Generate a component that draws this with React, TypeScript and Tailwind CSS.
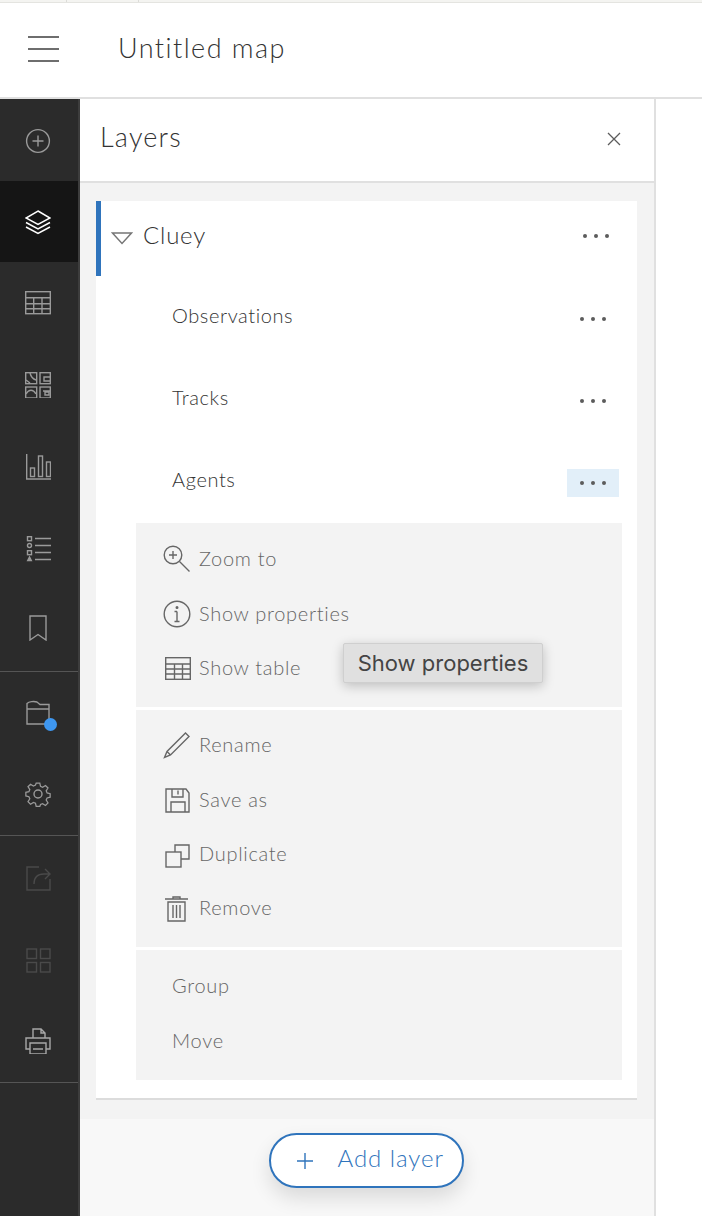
import React from 'react';

const font = 'font-["Lato","Noto_Sans",sans-serif]';

const Ico: React.FC<{ size?: number; className?: string; children: React.ReactNode; vb?: string; sw?: number }> = ({ size = 26, className = '', children, vb = '0 0 26 26', sw = 1.4 }) => (
  <svg width={size} height={size} viewBox={vb} fill="none" stroke="currentColor" strokeWidth={sw} className={className}>
    {children}
  </svg>
);

const TableGlyph = () => (
  <>
    <rect x="0.7" y="1.7" width="24.6" height="22" />
    <path d="M1 7.700h24M1 13.700h24M1 18.700h24M8.700 8v16M17 8v16" />
  </>
);

const railTop = [
  { key: 'add', active: false, icon: <Ico className="translate-y-[1px]"><circle cx="13" cy="13" r="11.400" /><path d="M13 7.500v11M7.500 13h11" /></Ico> },
  { key: 'layers', active: true, icon: <Ico className="text-white" sw={1.5}><path d="M13 2 25 9l-12 6.500L1 9z" /><path d="M1 13.500l12 6.500 12-6.500M1 18l12 6.500L25 18" /></Ico> },
  { key: 'table', active: false, icon: <Ico><TableGlyph /></Ico> },
  {
    key: 'maps', active: false, icon: (
      <Ico>
        <rect x="0.7" y="0.7" width="11" height="11" /><rect x="15" y="0.7" width="10.300" height="11" />
        <rect x="0.7" y="15" width="11" height="11" /><rect x="15" y="15" width="10.300" height="11" />
        <path d="M5 1c1 4 3 6 6 7M1 8l4 3M25 5h-6v4h6M1 22c3-5 7-5 10 0M25 19h-7M20 23h4v-3h-4z" />
      </Ico>
    ),
  },
  {
    key: 'chart', active: false, icon: (
      <Ico>
        <path d="M1.700 0v25h24.300" /><rect x="5.500" y="14" width="4" height="8.500" /><rect x="13.500" y="2" width="4" height="20.500" /><rect x="21.500" y="8" width="4" height="14.500" />
      </Ico>
    ),
  },
  {
    key: 'legend', active: false, icon: (
      <Ico className="translate-y-[1px]">
        <rect x="2.500" y="0.700" width="4" height="4" /><circle cx="4.500" cy="9.500" r="2" /><rect x="2.500" y="14.700" width="4" height="4" />
        <path d="M2.700 24.500 4.500 21l1.800 3.500z" fill="currentColor" /><path d="M10 2.500h16M10 9.500h16M10 16.500h16M10 23.500h16" />
      </Ico>
    ),
  },
  { key: 'bookmark', active: false, icon: <Ico className="-translate-y-[2px]"><path d="M5 1h16v24l-8-5.500L5 25z" /></Ico> },
];

const railBottomA = [
  {
    key: 'folder', dim: false, dot: true, icon: (
      <Ico><path d="M2 24V3.500C4 1.500 9 1 12 2l3 2.500h9V24zM2 9h22" /></Ico>
    ),
  },
  {
    key: 'gear', dim: false, dot: false, icon: (
      <Ico>
        <circle cx="13" cy="13" r="4" />
        <path d="M11 1h4l.8 3.600 2.300 1 3.200-2 2.800 2.800-2 3.200 1 2.300 3.400.8v4l-3.400.8-1 2.300 2 3.200-2.800 2.800-3.200-2-2.300 1L15 27h-4l-.8-3.600-2.300-1-3.200 2-2.800-2.800 2-3.200-1-2.300L-.5 15.300v-4l3.400-.8 1-2.300-2-3.200 2.800-2.800 3.200 2 2.300-1z" transform="translate(1.300 1.200) scale(.9)" />
      </Ico>
    ),
  },
];

const railBottomB = [
  { key: 'share', dim: true, icon: <Ico className="translate-y-[1px]"><path d="M25 14v11H2V2h12" /><path d="M9 19c0-7 4-10 10-10h5M20 4l5 5-5 5" /></Ico> },
  { key: 'apps', dim: true, icon: <Ico className="translate-y-[1px]"><rect x="2" y="2" width="9.500" height="9.500" /><rect x="15.500" y="2" width="9.500" height="9.500" /><rect x="2" y="15.500" width="9.500" height="9.500" /><rect x="15.500" y="15.500" width="9.500" height="9.500" /></Ico> },
  {
    key: 'print', dim: false, icon: (
      <Ico>
        <path d="M8 10V1h8l4 4v5M16 1v4h4" />
        <path d="M5 21H1V10h24v11h-4" /><path d="M5 15h16v11H5zM8 21h10" />
      </Ico>
    ),
  },
];

const MenuIcons: Record<string, React.ReactNode> = {
  zoom: <Ico size={28} vb="0 0 28 28"><circle cx="10" cy="10" r="8.800" /><path d="M10 6v8M6 10h8M16.500 16.500 26.500 26.500" /></Ico>,
  info: <Ico size={28} vb="0 0 28 28"><circle cx="14" cy="14" r="12.800" /><path d="M14 11.500v10M11.500 21.500h5M11.500 11.500H14" /><circle cx="14" cy="7.500" r=".8" fill="currentColor" /></Ico>,
  table: <Ico size={28} vb="0 0 28 28"><rect x="2.700" y="3.700" width="24.600" height="21.600" /><path d="M3 10h24M3 15h24M3 20h24M11.500 10v15M19.500 10v15" /></Ico>,
  rename: <Ico size={28} vb="0 0 28 28"><path d="M1.500 26.500 4 20.500 22.500 2l3.500 3.500L7.500 24zM4 20.500l3.500 3.500" /></Ico>,
  save: <Ico size={28} vb="0 0 28 28"><path d="M3 3h20l3 4v19H3z" /><path d="M9 3v8h11V3M15 4.500v4M8 26V16h14v10" /></Ico>,
  duplicate: <Ico size={28} vb="0 0 28 28"><rect x="3" y="12" width="15" height="15" /><path d="M12 12V5h14v14h-8" /></Ico>,
  remove: <Ico size={28} vb="0 0 28 28"><path d="M2 5h23M10 5V3h7v2M5 8v19h17V8zM10 11v13M13.500 11v13M17 11v13" /></Ico>,
};

const MenuRow: React.FC<{ label: string; icon?: string }> = ({ label, icon }) => (
  <div className="flex h-[54.4px] items-center text-[20px] font-light tracking-[0.7px] text-[#666666]">
    {icon ? (
      <>
        <span className="ml-[27px] flex w-[36px] shrink-0 text-[#666666]">{MenuIcons[icon]}</span>
        <span className="-translate-y-[1px]">{label}</span>
      </>
    ) : (
      <span className="ml-[36px]">{label}</span>
    )}
  </div>
);

const Dots: React.FC<{ active?: boolean }> = ({ active }) => (
  <div className={`flex h-[28px] w-[52px] items-center justify-center gap-[7px] ${active ? 'bg-[#e2eff9]' : ''}`}>
    <i className="size-[4px] rounded-full bg-[#5c5c5c]" />
    <i className="size-[4px] rounded-full bg-[#5c5c5c]" />
    <i className="size-[4px] rounded-full bg-[#5c5c5c]" />
  </div>
);

const LayerRow: React.FC<{ label: string; active?: boolean; tall?: boolean }> = ({ label, active, tall }) => (
  <div className={`flex items-center justify-between pl-[76px] pr-[18px] ${tall ? 'h-[83px]' : 'h-[82px]'}`}>
    <span className={`text-[20px] font-light tracking-[0.6px] text-[#333333] ${tall ? '-translate-y-[3px]' : '-translate-y-[2px]'}`}>{label}</span>
    <div className={tall ? 'translate-y-[1px]' : 'translate-y-[2px]'}><Dots active={active} /></div>
  </div>
);

const App: React.FC = () => {
  return (
    <div className={`flex h-[1216px] w-[702px] flex-col overflow-hidden bg-white ${font}`}>
      {/* browser strip */}
      <div className="flex h-[3px] shrink-0 border-b border-[#e4e4e0] bg-[#f4f4f1]">
        <div className="w-[67px] border-r border-[#dcdcd8]" />
        <div className="w-[72px] border-r border-[#dcdcd8]" />
      </div>

      {/* top bar */}
      <header className="flex h-[96px] shrink-0 items-center border-b-2 border-[#e0e0e0] bg-white">
        <div className="ml-[28px] flex h-[26px] w-[31px] -translate-y-[1px] flex-col justify-between">
          <i className="h-[2px] bg-[#6e6e6e]" />
          <i className="h-[2px] bg-[#6e6e6e]" />
          <i className="h-[2px] bg-[#6e6e6e]" />
        </div>
        <h1 className="ml-[59px] -translate-y-[2px] text-[27px] font-light tracking-[1.45px] text-[#333333]">Untitled map</h1>
      </header>

      <div className="flex min-h-0 flex-1">
        {/* side rail */}
        <nav className="flex w-[80px] shrink-0 flex-col border-r-2 border-[#3d3d3d] bg-[#2b2b2b] pr-[1px]">
          {railTop.map(item => (
            <div
              key={item.key}
              className={`-mr-[1px] flex h-[81.7px] items-center justify-center pr-[2px] ${item.active ? 'bg-[#151515] text-white' : 'text-[#9a9a9a]'}`}
            >
              {item.icon}
            </div>
          ))}
          <div className="-mr-[1px] h-[1px] shrink-0 bg-[#555555]" />
          {railBottomA.map(item => (
            <div key={item.key} className="flex h-[81.5px] items-center justify-center pr-[2px] text-[#9a9a9a]">
              <div className="relative flex">
                {item.icon}
                {item.dot && <span className="absolute -bottom-[5px] -right-[6px] size-[13px] rounded-full bg-[#3e97f0]" />}
              </div>
            </div>
          ))}
          <div className="-mr-[1px] h-[1px] shrink-0 bg-[#555555]" />
          {railBottomB.map(item => (
            <div key={item.key} className={`flex h-[82px] items-center justify-center pr-[2px] ${item.dim ? 'text-[#4a4a4a]' : 'text-[#a8a8a8]'}`}>
              {item.icon}
            </div>
          ))}
          <div className="-mr-[1px] h-[1px] shrink-0 bg-[#555555]" />
        </nav>

        {/* layers panel */}
        <section className="flex w-[576px] shrink-0 flex-col border-r-2 border-[#e0e0e0] bg-[#f3f3f3]">
          <div className="flex h-[84px] shrink-0 items-center justify-between border-b-2 border-[#e0e0e0] bg-white pl-[20px] pr-[33px]">
            <h2 className="-translate-y-[3px] text-[27px] font-light tracking-[1.2px] text-[#333333]">Layers</h2>
            <svg width="14" height="14" viewBox="0 0 14 14" stroke="#5c5c5c" strokeWidth="1.3" className="translate-y-[-1px]">
              <path d="M1 1l12 12M13 1 1 13" />
            </svg>
          </div>

          <div className="flex-1 px-[16px] pr-[17px] pt-[18px]">
            <div className="h-[899px] border-b-2 border-[#dcdcdc] bg-white">
              <div className="flex h-[75px] items-center justify-between border-l-[5px] border-[#2f74bc] pl-[10px] pr-[15px]">
                <div className="flex items-center gap-[10px]">
                  <svg width="22" height="13" viewBox="0 0 22 13" fill="none" stroke="#757575" strokeWidth="1.4">
                    <path d="M1.500 1h19L11 11.500z" />
                  </svg>
                  <span className="-translate-y-[4px] text-[24px] font-light tracking-[0.8px] text-[#333333]">Cluey</span>
                </div>
                <div className="-translate-y-[3px]"><Dots /></div>
              </div>
              <LayerRow label="Observations" />
              <LayerRow label="Tracks" />
              <LayerRow label="Agents" active tall />

              <div className="relative ml-[40px] mr-[15px] flex flex-col gap-[3px] bg-white">
                <div className="h-[184px] bg-[#f3f3f3] pt-[9px]">
                  <MenuRow label="Zoom to" icon="zoom" />
                  <MenuRow label="Show properties" icon="info" />
                  <MenuRow label="Show table" icon="table" />
                </div>
                <div className="h-[237px] bg-[#f3f3f3] pt-[8px]">
                  <MenuRow label="Rename" icon="rename" />
                  <MenuRow label="Save as" icon="save" />
                  <MenuRow label="Duplicate" icon="duplicate" />
                  <MenuRow label="Remove" icon="remove" />
                </div>
                <div className="h-[130px] bg-[#f3f3f3] pt-[8px]">
                  <MenuRow label="Group" />
                  <MenuRow label="Move" />
                </div>

                {/* tooltip */}
                <div className='absolute left-[207px] top-[120px] flex h-[40px] w-[200px] items-center justify-center rounded-[2px] border border-[#cfcfcf] bg-[#e0e0e0] font-["Inter",sans-serif] text-[22px] text-[#444444] shadow-[0_3px_12px_rgba(0,0,0,0.22)]'>
                  Show properties
                </div>
              </div>
            </div>
          </div>

          <div className="flex h-[97px] shrink-0 justify-center bg-[#f8f8f8] pr-[2px] pt-[14px]">
            <button className="flex h-[55px] w-[195px] items-center rounded-full border-2 border-[#2f74bc] bg-white pl-[26px] text-[24px] font-light tracking-[0.95px] text-[#2f74bc] shadow-[0_10px_20px_rgba(0,0,0,0.12)]">
              <svg width="16" height="16" viewBox="0 0 16 16" stroke="#2f74bc" strokeWidth="1.4" className="mr-[25px]">
                <path d="M8 0v16M0 8h16" />
              </svg>
              <span className="-translate-y-[3px]">Add layer</span>
            </button>
          </div>
        </section>

        <div className="flex-1 bg-white" />
      </div>
    </div>
  );
};

export default App;
